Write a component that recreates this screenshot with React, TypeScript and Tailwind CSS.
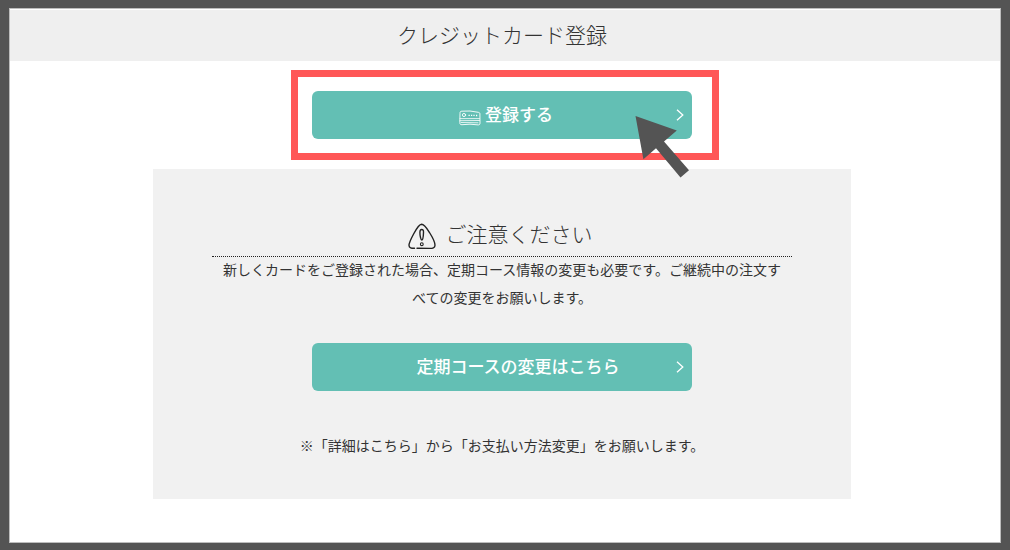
import type { ReactNode } from "react";

interface ActionButtonProps {
  children: ReactNode;
}

function ChevronIcon() {
  return (
    <svg
      className="absolute right-2 top-1/2 h-3 w-2 -translate-y-1/2"
      viewBox="0 0 8 12"
      fill="none"
      stroke="currentColor"
      strokeWidth="1.3"
      aria-hidden="true"
    >
      <path d="M1 .8 6.8 6 1 11.2" />
    </svg>
  );
}

function CardIcon() {
  return (
    <svg
      className="mt-2 h-4 w-[22px]"
      viewBox="0 0 22 16"
      fill="none"
      stroke="currentColor"
      strokeLinecap="round"
      strokeLinejoin="round"
      aria-hidden="true"
    >
      <path
        d="M1 3C1 1.6 1.6 1.2 3 1.2l8-.2 8.3 1.3c1.2.2 1.6.7 1.6 1.7l.1 9c0 1.500-.6 1.900-1.700 1.900L11 14.200l-8 .5c-1.500 0-2.200-.4-2.200-1.700z"
        strokeWidth=".9"
      />
      <path d="M1 8.600h19.500M1 10.700l19.500-.2M2 12.500l17 .3" strokeWidth=".8" />
      <circle cx="5" cy="5" r="1.6" strokeWidth=".9" />
      <path
        d="M9.500 5.300h1.300M12 5.300h1.200M14.400 5.400h1.200M17 5.500h1.200"
        strokeWidth="1.3"
        strokeLinecap="butt"
      />
    </svg>
  );
}

function WarningIcon() {
  return (
    <svg
      className="mt-1 h-7 w-7"
      viewBox="0 0 28 28"
      fill="none"
      stroke="#222222"
      strokeWidth="1.4"
      strokeLinecap="round"
      strokeLinejoin="round"
      aria-hidden="true"
    >
      <path d="M6.5 26.300C3.500 26.400 1 26 1 23.300c0-2.500 2.300-7 4.600-11.300C8.500 6.500 10.800 2.300 13.600 2.200c3 0 5.200 4 8.200 8.800 2.700 4.300 5.200 9.300 5.200 12.200 0 2.600-2.500 3.300-5.500 3.200L9 26.200" />
      <path d="M11.900 10.500c0-2.200.5-3 1.800-3s1.900.8 1.800 2.900c-.1 3.100-.7 7.600-1.700 7.600s-1.900-4.400-1.900-7.500z" />
      <circle cx="13.8" cy="22.2" r="1.4" strokeWidth="1.1" />
    </svg>
  );
}

function PointerArrow() {
  return (
    <svg
      className="pointer-events-none absolute right-[22px] top-[38px] h-[63px] w-[55px]"
      viewBox="0 0 55 63"
      fill="#545454"
      aria-hidden="true"
    >
      <path d="M.5 1 41.800 15.500 29 26.600 54 55.200 45.500 62.600 21 33.300 8.400 44.300z" />
    </svg>
  );
}

function RegisterButton({ children }: ActionButtonProps) {
  return (
    <button
      type="button"
      className="relative flex h-12 w-full items-center justify-center gap-1 rounded-md bg-[#63bfb4] pb-0.5 pl-2 text-[17px] font-medium text-white"
    >
      {children}
      <ChevronIcon />
    </button>
  );
}

function CourseLink({ children }: ActionButtonProps) {
  return (
    <a
      href="#course"
      className="relative mx-auto mt-8 flex h-12 w-full max-w-[380px] items-center justify-center rounded-md bg-[#63bfb4] pb-0.5 pl-8 text-[17px] font-medium text-white"
    >
      {children}
      <ChevronIcon />
    </a>
  );
}

export default function App() {
  return (
    <div
      lang="ja"
      className="flex min-h-screen flex-col bg-[#545454] px-[9px] pb-[7px] pt-2 font-['Noto_Sans_CJK_JP',sans-serif] text-[#333333]"
    >
      <main className="flex-1 border border-[#bdbdbd] bg-white pb-10 pt-px">
        <header className="bg-[#efefef] pb-0.5 pr-1.5">
          <h1 className="text-center text-[21px] font-light leading-[49px]">
            クレジットカード登録
          </h1>
        </header>

        <div className="relative mx-auto mt-[9px] w-full max-w-[428px] border-[7px] border-[#ff5757] py-3.5 pl-3.5 pr-5">
          <RegisterButton>
            <CardIcon />
            登録する
          </RegisterButton>
          <PointerArrow />
        </div>

        <div className="pr-1.5">
          <section className="mx-auto mt-[9px] w-full max-w-[698px] bg-[#f1f1f1] px-[59px] pb-10 pt-[45px]">
            <h2 className="flex items-center justify-center gap-2.5 border-b border-dotted border-[#222222] pb-[3px] pr-1 text-[21px] font-light leading-[39px]">
              <WarningIcon />
              ご注意ください
            </h2>
            <p className="-mt-0.5 px-2 text-center text-sm leading-7">
              新しくカードをご登録された場合、定期コース情報の変更も必要です。ご継続中の注文すべての変更をお願いします。
            </p>
            <CourseLink>定期コースの変更はこちら</CourseLink>
            <p className="mt-10 text-center text-sm leading-7">
              ※「詳細はこちら」から「お支払い方法変更」をお願いします。
            </p>
          </section>
        </div>
      </main>
    </div>
  );
}
